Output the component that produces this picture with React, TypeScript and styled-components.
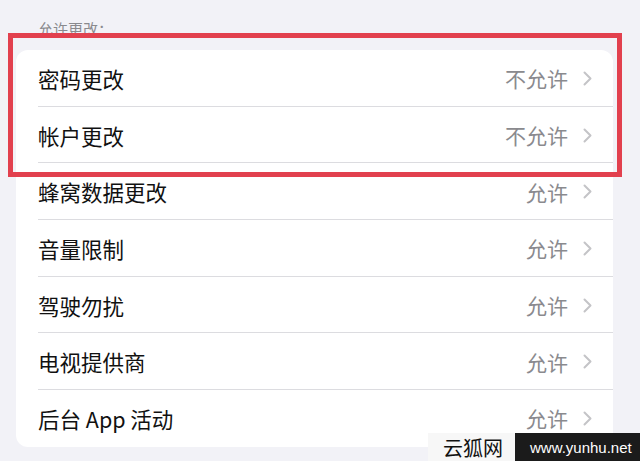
import React from "react";
import styled, { createGlobalStyle } from "styled-components";

const GlobalStyle = createGlobalStyle`
  body {
    margin: 0;
    background: #f2f2f7;
    font-family: "Noto Sans CJK SC", "Noto Sans", sans-serif;
  }
`;

const Page = styled.div`
  position: relative;
  width: 640px;
  height: 461px;
  overflow: hidden;
  background: #f2f2f7;
`;

const SectionHeader = styled.div`
  padding: 19px 0 0 38px;
  height: 20px;
  line-height: 20px;
  font-size: 15px;
  color: #8a8a8e;
  margin-bottom: 11px;
`;

const Card = styled.div`
  margin-left: 16px;
  width: 597px;
  background: #ffffff;
  border-radius: 12px;
`;

const Row = styled.div<{ $last?: boolean }>`
  position: relative;
  display: flex;
  align-items: center;
  height: 56.7px;
  padding: 0 21px 0 22px;

  &::after {
    content: "";
    display: ${(p) => (p.$last ? "none" : "block")};
    position: absolute;
    left: 22px;
    right: 0;
    bottom: 0;
    height: 1px;
    background: #dcdce0;
  }
`;

const Title = styled.span`
  font-size: 21.5px;
  color: #111;
`;

const Value = styled.span`
  margin-left: auto;
  font-size: 21px;
  color: #8a8a8e;
`;

const Chevron = styled.svg`
  margin-left: 15px;
  width: 9px;
  height: 15px;
`;

const Highlight = styled.div`
  position: absolute;
  left: 8px;
  top: 33px;
  width: 614px;
  height: 144px;
  box-sizing: border-box;
  border: 5px solid #e2404e;
`;

const Watermark = styled.div`
  position: absolute;
  right: 0;
  bottom: 0;
  display: flex;
  height: 28px;
`;

const MarkName = styled.div`
  display: flex;
  align-items: center;
  padding: 0 12px 0 15px;
  background: #f7f7f7;
  font-size: 20px;
  color: #111;
`;

const MarkUrl = styled.div`
  display: flex;
  align-items: center;
  padding: 0 10px 0 15px;
  width: 125px;
  box-sizing: border-box;
  background: #1b1b1b;
  color: #fff;
  font-family: "Liberation Sans", Arial, sans-serif;
  font-size: 15px;
`;

const rows = [
  { title: "密码更改", value: "不允许" },
  { title: "帐户更改", value: "不允许" },
  { title: "蜂窝数据更改", value: "允许" },
  { title: "音量限制", value: "允许" },
  { title: "驾驶勿扰", value: "允许" },
  { title: "电视提供商", value: "允许" },
  { title: "后台 App 活动", value: "允许" },
];

const App = () => {
  return (
    <>
      <GlobalStyle />
      <Page>
        <SectionHeader>允许更改：</SectionHeader>
        <Card>
          {rows.map((r, i) => (
            <Row key={r.title} $last={i === rows.length - 1}>
              <Title>{r.title}</Title>
              <Value>{r.value}</Value>
              <Chevron viewBox="0 0 9 15">
                <path
                  d="M1.5 1.5 L7.5 7.5 L1.5 13.5"
                  fill="none"
                  stroke="#c4c4c7"
                  strokeWidth="2"
                  strokeLinecap="round"
                  strokeLinejoin="round"
                />
              </Chevron>
            </Row>
          ))}
        </Card>
        <Highlight />
        <Watermark>
          <MarkName>云狐网</MarkName>
          <MarkUrl>www.yunhu.net</MarkUrl>
        </Watermark>
      </Page>
    </>
  );
};

export default App;
